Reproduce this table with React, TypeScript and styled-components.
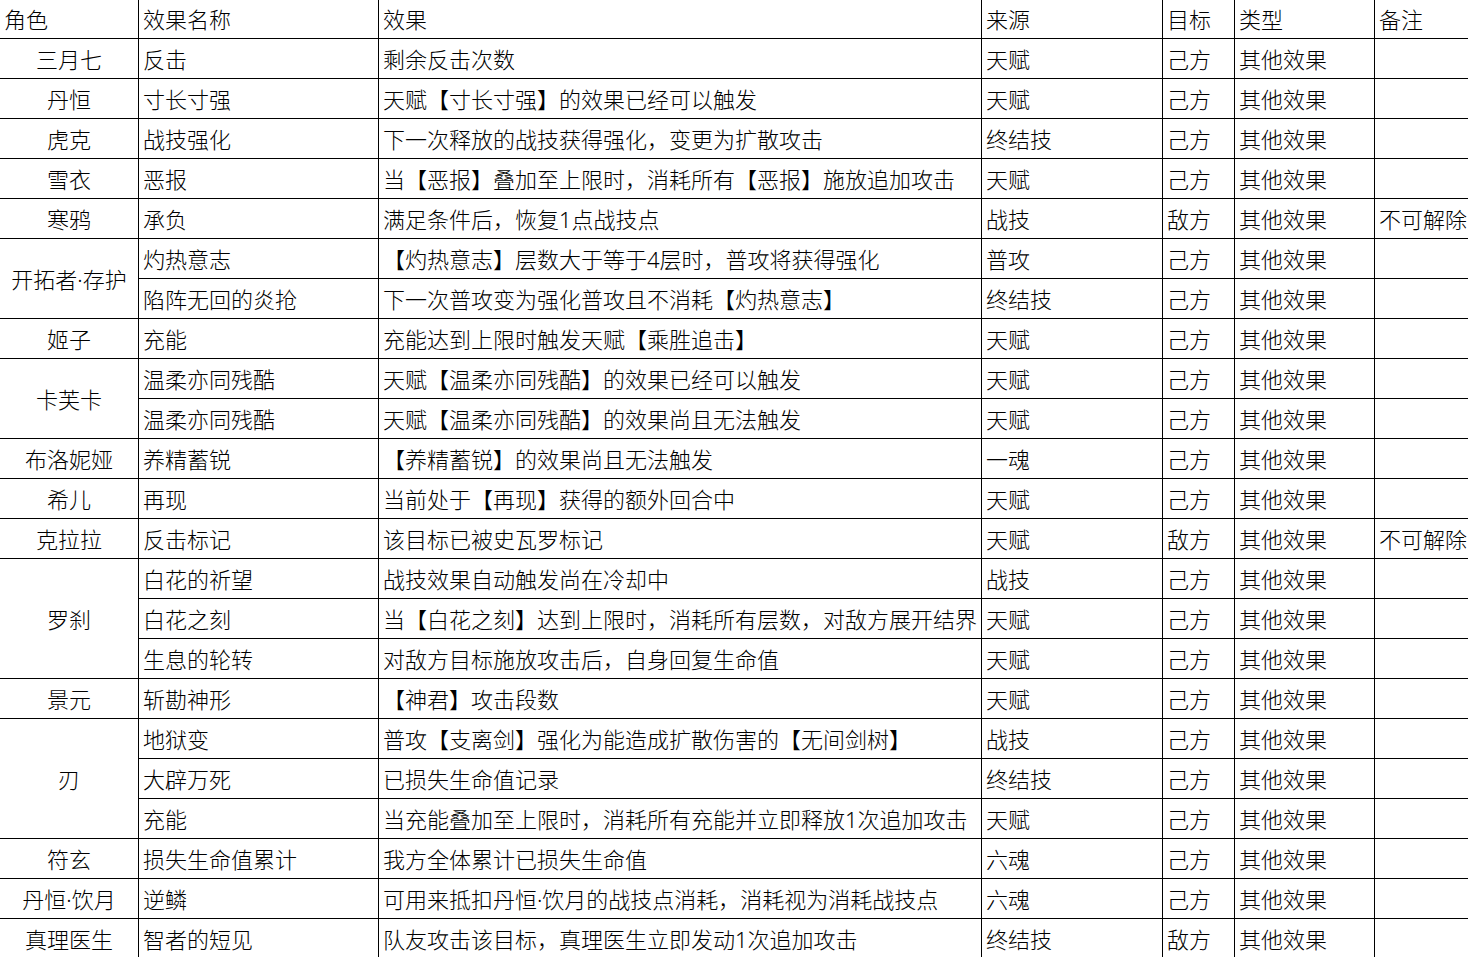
import React from "react";
import styled, { createGlobalStyle } from "styled-components";

const Global = createGlobalStyle`
  html, body { margin: 0; padding: 0; background: #fff; overflow: hidden; }
  body { font-family: "Noto Sans", "Noto Sans CJK SC", sans-serif; color: #000; }
`;

const Table = styled.table`
  border-collapse: separate;
  border-spacing: 0;
  table-layout: fixed;
  width: 1500px;
  font-size: 22px;
  font-weight: 300;
`;

const Head = styled.th`
  height: 39px;
  box-sizing: border-box;
  padding: 0 0 0 4px;
  text-align: left;
  font-weight: 300;
  border-right: 1px solid #000;
  border-bottom: 1px solid #000;
  line-height: 30px;
  vertical-align: middle;
  white-space: nowrap;
  overflow: hidden;
`;

const Cell = styled.td<{ $center?: boolean }>`
  height: 40px;
  padding: 1px 0 0 4px;
  box-sizing: border-box;
  text-align: ${(p) => (p.$center ? "center" : "left")};
  ${(p) => (p.$center ? "padding-left: 0;" : "")}
  vertical-align: middle;
  border-right: 1px solid #000;
  border-bottom: 1px solid #000;
  line-height: 30px;
  white-space: nowrap;
  overflow: hidden;
`;

type Row = {
  role?: string;
  span?: number;
  name: string;
  effect: string;
  src: string;
  target: string;
  note?: string;
};

const rows: Row[] = [
  { role: "三月七", name: "反击", effect: "剩余反击次数", src: "天赋", target: "己方" },
  { role: "丹恒", name: "寸长寸强", effect: "天赋【寸长寸强】的效果已经可以触发", src: "天赋", target: "己方" },
  { role: "虎克", name: "战技强化", effect: "下一次释放的战技获得强化，变更为扩散攻击", src: "终结技", target: "己方" },
  { role: "雪衣", name: "恶报", effect: "当【恶报】叠加至上限时，消耗所有【恶报】施放追加攻击", src: "天赋", target: "己方" },
  { role: "寒鸦", name: "承负", effect: "满足条件后，恢复1点战技点", src: "战技", target: "敌方", note: "不可解除" },
  { role: "开拓者·存护", span: 2, name: "灼热意志", effect: "【灼热意志】层数大于等于4层时，普攻将获得强化", src: "普攻", target: "己方" },
  { name: "陷阵无回的炎抢", effect: "下一次普攻变为强化普攻且不消耗【灼热意志】", src: "终结技", target: "己方" },
  { role: "姬子", name: "充能", effect: "充能达到上限时触发天赋【乘胜追击】", src: "天赋", target: "己方" },
  { role: "卡芙卡", span: 2, name: "温柔亦同残酷", effect: "天赋【温柔亦同残酷】的效果已经可以触发", src: "天赋", target: "己方" },
  { name: "温柔亦同残酷", effect: "天赋【温柔亦同残酷】的效果尚且无法触发", src: "天赋", target: "己方" },
  { role: "布洛妮娅", name: "养精蓄锐", effect: "【养精蓄锐】的效果尚且无法触发", src: "一魂", target: "己方" },
  { role: "希儿", name: "再现", effect: "当前处于【再现】获得的额外回合中", src: "天赋", target: "己方" },
  { role: "克拉拉", name: "反击标记", effect: "该目标已被史瓦罗标记", src: "天赋", target: "敌方", note: "不可解除" },
  { role: "罗刹", span: 3, name: "白花的祈望", effect: "战技效果自动触发尚在冷却中", src: "战技", target: "己方" },
  { name: "白花之刻", effect: "当【白花之刻】达到上限时，消耗所有层数，对敌方展开结界", src: "天赋", target: "己方" },
  { name: "生息的轮转", effect: "对敌方目标施放攻击后，自身回复生命值", src: "天赋", target: "己方" },
  { role: "景元", name: "斩勘神形", effect: "【神君】攻击段数", src: "天赋", target: "己方" },
  { role: "刃", span: 3, name: "地狱变", effect: "普攻【支离剑】强化为能造成扩散伤害的【无间剑树】", src: "战技", target: "己方" },
  { name: "大辟万死", effect: "已损失生命值记录", src: "终结技", target: "己方" },
  { name: "充能", effect: "当充能叠加至上限时，消耗所有充能并立即释放1次追加攻击", src: "天赋", target: "己方" },
  { role: "符玄", name: "损失生命值累计", effect: "我方全体累计已损失生命值", src: "六魂", target: "己方" },
  { role: "丹恒·饮月", name: "逆鳞", effect: "可用来抵扣丹恒·饮月的战技点消耗，消耗视为消耗战技点", src: "六魂", target: "己方" },
  { role: "真理医生", name: "智者的短见", effect: "队友攻击该目标，真理医生立即发动1次追加攻击", src: "终结技", target: "敌方" },
];

const widths = [139, 240, 603, 181, 72, 140, 125];
const headers = ["角色", "效果名称", "效果", "来源", "目标", "类型", "备注"];

export default function App() {
  return (
    <>
      <Global />
      <Table>
        <colgroup>
          {widths.map((w, i) => (
            <col key={i} style={{ width: w }} />
          ))}
        </colgroup>
        <thead>
          <tr>
            {headers.map((h) => (
              <Head key={h}>{h}</Head>
            ))}
          </tr>
        </thead>
        <tbody>
          {rows.map((r, i) => (
            <tr key={i}>
              {r.role !== undefined && (
                <Cell $center rowSpan={r.span ?? 1}>
                  {r.role}
                </Cell>
              )}
              <Cell>{r.name}</Cell>
              <Cell>{r.effect}</Cell>
              <Cell>{r.src}</Cell>
              <Cell>{r.target}</Cell>
              <Cell>其他效果</Cell>
              <Cell>{r.note ?? ""}</Cell>
            </tr>
          ))}
        </tbody>
      </Table>
    </>
  );
}
